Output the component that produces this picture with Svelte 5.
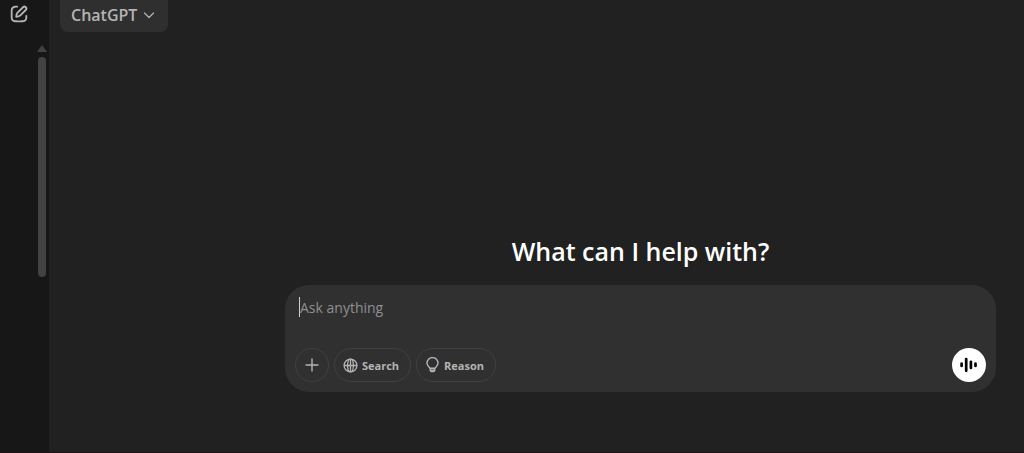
<script lang="ts">
	let prompt = $state('');
</script>

<svelte:head>
	<title>ChatGPT</title>
</svelte:head>

<div class="shell">
	<aside class="sidebar">
		<button class="icon-btn" type="button" aria-label="New chat">
			<svg width="22" height="22" viewBox="0 0 24 24" fill="currentColor">
				<path
					d="M15.673 3.913a3.121 3.121 0 1 1 4.414 4.414l-5.937 5.937a5 5 0 0 1-2.828 1.415l-2.18.31a1 1 0 0 1-1.132-1.13l.311-2.18A5 5 0 0 1 9.736 9.85l5.937-5.937Zm3 1.414a1.121 1.121 0 0 0-1.586 0l-5.937 5.937a3 3 0 0 0-.849 1.697l-.123.86.86-.122a3 3 0 0 0 1.698-.849l5.937-5.937a1.121 1.121 0 0 0 0-1.586ZM11 4a1 1 0 0 1-1 1c-.998 0-1.702.008-2.253.06-.54.052-.862.141-1.109.267a3 3 0 0 0-1.311 1.311c-.134.263-.226.611-.276 1.216C5.001 8.471 5 9.264 5 10.4v3.2c0 1.137 0 1.929.051 2.546.05.605.142.953.276 1.216a3 3 0 0 0 1.311 1.311c.263.134.611.226 1.216.276.617.05 1.41.051 2.546.051h3.2c1.137 0 1.929 0 2.546-.051.605-.05.953-.142 1.216-.276a3 3 0 0 0 1.311-1.311c.126-.247.215-.569.266-1.108.053-.552.06-1.256.06-2.255a1 1 0 1 1 2 .002c0 .978-.006 1.78-.069 2.442-.064.673-.192 1.27-.475 1.827a5 5 0 0 1-2.185 2.185c-.592.302-1.232.428-1.961.487C15.6 21 14.727 21 13.643 21h-3.286c-1.084 0-1.958 0-2.666-.058-.728-.06-1.369-.185-1.96-.487a5 5 0 0 1-2.186-2.185c-.302-.592-.428-1.233-.487-1.961C3 15.6 3 14.727 3 13.643v-3.286c0-1.084 0-1.958.058-2.666.06-.729.185-1.369.487-1.961A5 5 0 0 1 5.73 3.545c.556-.284 1.154-.411 1.827-.475C8.22 3.007 9.021 3 10 3a1 1 0 0 1 1 1Z"
				/>
			</svg>
		</button>
		<div class="scrollbar" aria-hidden="true">
			<div class="scroll-arrow"></div>
			<div class="scroll-thumb"></div>
		</div>
	</aside>

	<main>
		<header>
			<button class="model-btn" type="button">
				ChatGPT
				<svg width="12" height="12" viewBox="0 0 12 12" fill="none" stroke="currentColor">
					<path d="M1.5 4 6 8.5 10.5 4" stroke-width="1.2" stroke-linecap="round" stroke-linejoin="round" />
				</svg>
			</button>
		</header>

		<section class="content">
			<h1>What can I help with?</h1>

			<form class="composer" onsubmit={(e) => e.preventDefault()}>
				<div class="input-row">
					<span class="caret"></span>
					<input type="text" placeholder="Ask anything" aria-label="Ask anything" bind:value={prompt} />
				</div>

				<div class="actions">
					<button class="pill round" type="button" aria-label="Add">
						<svg width="14" height="14" viewBox="0 0 14 14" fill="none" stroke="currentColor">
							<path d="M7 1v12M1 7h12" stroke-width="1.4" stroke-linecap="round" />
						</svg>
					</button>
					<button class="pill" type="button">
						<svg width="15" height="15" viewBox="0 0 15 15" fill="none" stroke="currentColor" stroke-width="1.3">
							<circle cx="7.5" cy="7.5" r="6.4" />
							<ellipse cx="7.5" cy="7.5" rx="2.9" ry="6.4" />
							<path d="M1.1 7.5h12.8M7.5 1.1v12.8" />
						</svg>
						Search
					</button>
					<button class="pill" type="button">
						<svg width="15" height="16" viewBox="0 0 15 16" fill="none" stroke="currentColor" stroke-width="1.4">
							<path d="M5 11.3C4.8 10.3 2 9.2 2 6.100a5.500 5.500 0 0 1 11 0c0 3.100-2.800 4.200-3 5.200Z" stroke-linejoin="round" />
							<path d="M4.600 11.400h5.800v1.800a2 2 0 0 1-2 2H6.600a2 2 0 0 1-2-2Z" fill="currentColor" stroke="none" />
							<path d="M6 12.700h3" stroke="#303030" stroke-width="0.6" />
						</svg>
						Reason
					</button>
					<button class="voice-btn" type="button" aria-label="Voice mode">
						<svg width="20" height="20" viewBox="0 0 20 20" fill="none" stroke="currentColor" stroke-width="2.7" stroke-linecap="round">
							<path d="M2.6 8.700v2.200M7.200 4v11.800M11.900 6.800v6.200M16.500 8.700v2.200" />
						</svg>
					</button>
				</div>
			</form>
		</section>
	</main>
</div>

<style>
	:global(body) {
		background: #212121;
	}

	.shell {
		display: flex;
		min-height: 100vh;
		box-sizing: border-box;
		font-family: 'Open Sans', 'Segoe UI', sans-serif;
		color: #b4b4b4;
		border-bottom: 1px solid #1b1417;
	}

	button {
		display: inline-flex;
		align-items: center;
		justify-content: center;
		padding: 0;
		border: none;
		background: none;
		color: inherit;
		font: inherit;
		cursor: pointer;
	}

	.sidebar {
		flex: 0 0 49px;
		display: flex;
		flex-direction: column;
		background: #171717;
	}

	.icon-btn {
		align-self: flex-start;
		margin: 3px 0 0 8px;
	}

	.scrollbar {
		display: flex;
		flex-direction: column;
		align-items: center;
		align-self: flex-end;
		gap: 5px;
		margin: 20px 2px 0 0;
	}

	.scroll-arrow {
		border: 5px solid transparent;
		border-top: none;
		border-bottom: 7px solid #424242;
	}

	.scroll-thumb {
		width: 8px;
		height: 220px;
		border-radius: 4px;
		background: #424242;
	}

	main {
		flex: 1;
		min-width: 0;
		background: #212121;
	}

	header {
		padding-left: 11px;
	}

	.model-btn {
		gap: 6px;
		height: 32px;
		padding: 0 13px 2px 11px;
		border-radius: 0 0 8px 8px;
		background: #2f2f2f;
		font-size: 16px;
		font-weight: 600;
	}

	.content {
		padding: 202px 28px 56px 236px;
	}

	h1 {
		margin: 0 0 17px;
		color: #fff;
		font-size: 25px;
		font-weight: 600;
		line-height: 34px;
		text-align: center;
	}

	.composer {
		padding: 10px;
		border-radius: 24px;
		background: #303030;
	}

	.input-row {
		display: flex;
		align-items: center;
		height: 24px;
		padding-left: 4px;
	}

	.caret {
		width: 1px;
		height: 20px;
		background: #d0d0d0;
	}

	input {
		flex: 1;
		min-width: 0;
		padding: 0;
		border: none;
		outline: none;
		background: none;
		color: #fff;
		font: inherit;
		font-size: 14px;
	}

	input::placeholder {
		color: #8f8f8f;
		opacity: 1;
	}

	.actions {
		display: flex;
		align-items: center;
		gap: 5px;
		margin-top: 29px;
	}

	.pill {
		gap: 4px;
		height: 34px;
		padding: 0 11px 0 8px;
		border: 1px solid #414141;
		border-radius: 17px;
		box-sizing: border-box;
		font-size: 11px;
		font-weight: 700;
	}

	.round {
		width: 34px;
		padding: 0;
	}

	.voice-btn {
		width: 34px;
		height: 34px;
		margin-left: auto;
		border-radius: 50%;
		background: #fff;
		color: #000;
	}
</style>
